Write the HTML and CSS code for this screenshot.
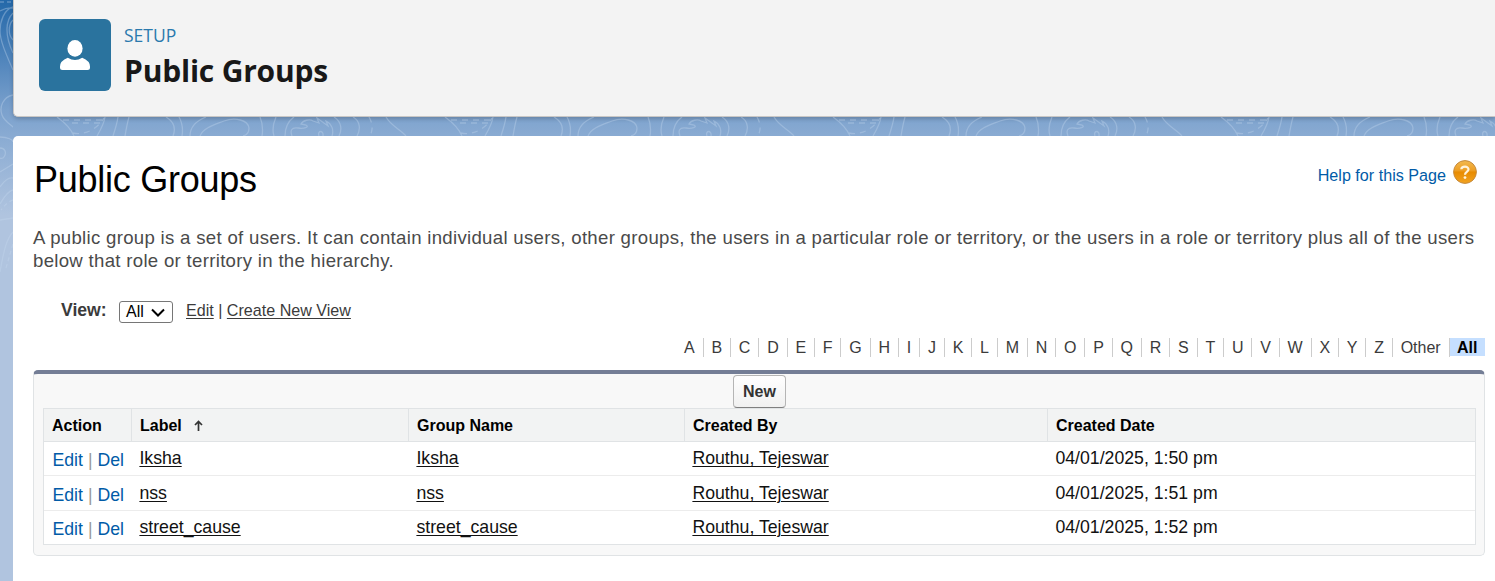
FILE: index.html
```html
<!DOCTYPE html>
<html lang="en">
<head>
<meta charset="utf-8">
<title>Public Groups</title>
<link rel="stylesheet" href="styles.css">
</head>
<body>
<div class="page">
  <div class="rail">
    <svg width="13" height="581" viewBox="0 0 13 581" class="contours">
      <path d="M13 7C4 9 0 22 0 31S5 52 13 70M13 13C6 20 4 34 13 53M13 20C8 25 8 35 13 40M0 11Q7 7 13 8"/>
      <path d="M13 95C3 97-1 107 2 115C5 124 16 126 21 136M0 137C8 137 13 140 13 142M0 148C5 148 6 152 5 155S2 159 0 158M13 164L0 172M13 178C8 177 4 181 0 187M13 190C8 191 4 197 0 204M0 220L13 218M13 232C7 238 4 249 0 272" />
      <path stroke-dasharray="4 3" d="M0 2H13M13 200C9 201 4 206 1 210M13 244L6 268"/>
    </svg>
  </div>
  <div class="main">
    <header class="setup-header">
      <div class="setup-icon">
        <svg width="30" height="30" viewBox="0 0 30 30"><ellipse cx="15" cy="8.4" rx="7.6" ry="8.4" fill="#fff"/><path fill="#fff" d="M7.8 17.8Q15 22.2 22.2 17.8Q30 21 30 26.5V27.5Q30 30 27.5 30H2.500Q0 30 0 27.500V26.500Q0 21 7.800 17.800Z"/></svg>
      </div>
      <div>
        <div class="eyebrow">SETUP</div>
        <div class="setup-title">Public Groups</div>
      </div>
    </header>
    <svg class="contours strip" width="1482" height="19" viewBox="13 117 1482 19">
      <defs>
        <g id="tile">
          <path d="M57 117C64 122 71 129 74 136M105 117C104 124 100 131 97 136M118 117C117 124 115 130 113 136M129 117C127 124 126 130 125 136M166 117C176 123 175 131 173 136M179 117C183 124 183 130 182 136M190 136C190 127 196 121 206 117M200 136C203 128 214 125 224 121C235 117 248 120 249 128C249 132 247 135 243 136M260 117C263 124 263 130 262 136M276 117C273 124 272 130 274 136M294 117C287 122 285 129 285 136M292 136C290 131 291 127 298 128C304 129 310 127 306 125L301 124C303 120 310 119 313 121L319 123L317 118L328 126L326 121C332 124 334 130 332 136M319 136C317 130 324 130 323 136M334 117C342 122 342 130 339 136M353 117C360 121 361 129 357 136M386 117C391 126 400 129 406 136"/>
          <path stroke-dasharray="6 5" d="M63 120H102M72 123H103M73 133C88 136 99 126 104 118M369 117C373 124 373 130 370 136"/>
        </g>
      </defs>
      <use href="#tile"/><use href="#tile" x="388"/><use href="#tile" x="776"/><use href="#tile" x="1164"/>
    </svg>
    <main class="content">
      <div class="title-row">
        <h1>Public Groups</h1>
        <a class="help">Help for this Page
          <svg width="24" height="24" viewBox="0 0 24 24"><defs><linearGradient id="orange" x1="0" y1="0" x2="0" y2="1"><stop offset="0" stop-color="#f2b950"/><stop offset=".45" stop-color="#ed9d22"/><stop offset=".5" stop-color="#e88b00"/><stop offset="1" stop-color="#f2a321"/></linearGradient></defs><circle cx="12" cy="12" r="11.400" fill="url(#orange)" stroke="#c58a3e"/><path d="M8.300 9.300C8.500 5.800 15.500 5.700 15.500 9.300C15.500 12 12 11.800 12 14.800" fill="none" stroke="#fff3dc" stroke-width="2.200"/><circle cx="12" cy="17.600" r="1.400" fill="#fff3dc"/></svg>
        </a>
      </div>
      <p class="description">A public group is a set of users. It can contain individual users, other groups, the users in a particular role or territory, or the users in a role or territory plus all of the users<br>below that role or territory in the hierarchy.</p>
      <div class="view-row">
        <b>View:</b>
        <span class="select">All <svg width="14" height="9" viewBox="0 0 14 9"><path d="M1 1.500L7 7.500L13 1.500" fill="none" stroke="#000" stroke-width="2"/></svg></span>
        <span class="view-links"><u>Edit</u> | <u>Create New View</u></span>
      </div>
      <nav class="rolodex"><a>A</a><a>B</a><a>C</a><a>D</a><a>E</a><a>F</a><a>G</a><a>H</a><a>I</a><a>J</a><a>K</a><a>L</a><a>M</a><a>N</a><a>O</a><a>P</a><a>Q</a><a>R</a><a>S</a><a>T</a><a>U</a><a>V</a><a>W</a><a>X</a><a>Y</a><a>Z</a><a>Other</a><a class="current">All</a></nav>
      <section class="list">
        <div class="buttons"><button>New</button></div>
        <div class="table">
          <div class="row head"><div>Action</div><div>Label <svg width="9" height="11" viewBox="0 0 9 11"><path d="M4.500 11V1.500M1 5L4.500 1.500L8 5" fill="none" stroke="#333" stroke-width="1.700"/></svg></div><div>Group Name</div><div>Created By</div><div>Created Date</div></div>
          <div class="row"><div class="actions"><a>Edit</a><i>|</i><a>Del</a></div><div><u>Iksha</u></div><div><u>Iksha</u></div><div><u>Routhu, Tejeswar</u></div><div>04/01/2025, 1:50 pm</div></div>
          <div class="row mid"><div class="actions"><a>Edit</a><i>|</i><a>Del</a></div><div><u>nss</u></div><div><u>nss</u></div><div><u>Routhu, Tejeswar</u></div><div>04/01/2025, 1:51 pm</div></div>
          <div class="row"><div class="actions"><a>Edit</a><i>|</i><a>Del</a></div><div><u>street_cause</u></div><div><u>street_cause</u></div><div><u>Routhu, Tejeswar</u></div><div>04/01/2025, 1:52 pm</div></div>
        </div>
      </section>
    </main>
  </div>
</div>
</body>
</html>
```
FILE: styles.css
```css
* { box-sizing: border-box; }
body { margin: 0; overflow: hidden; font: 16px "Liberation Sans", Arial, sans-serif; color: #3b3b3b; }
.page { display: grid; grid-template-columns: 13px 1fr; height: 581px; background: linear-gradient(#2468a9 0, #4f84bb 58px, #7ba1cd 110px, #8eaed4 145px, #b0c4df 215px); }
.rail { overflow: hidden; }
.contours { display: block; fill: none; stroke: #c5d9ee; stroke-opacity: .36; stroke-width: 1.3; }
.main { display: flex; flex-direction: column; min-width: 0; }
.setup-header { display: flex; height: 117px; padding: 19px 0 0 25px; gap: 13px; background: #f3f3f3; border: 1px solid #c9c7c5; border-width: 0 0 1px 1px; border-radius: 0 0 0 5px; box-shadow: 0 2px 4px rgba(0,0,0,.2); }
.setup-icon { display: flex; align-items: center; justify-content: center; width: 72px; height: 72px; border-radius: 6px; background: #2a739e; }
.eyebrow { padding-top: 5px; font: 17.5px/23px "Open Sans", sans-serif; color: #2a79ad; }
.setup-title { font: bold 30px/40px "Open Sans", sans-serif; letter-spacing: -.2px; padding-top: 4px; color: #181818; }
.strip { flex: none; }
.content { flex: 1; padding: 0 10px 0 20px; background: #fff; border-radius: 5px 0 0 0; }
.title-row { display: flex; justify-content: space-between; height: 90px; padding: 22px 8px 0 1px; }
h1 { margin: 0; font-size: 36px; letter-spacing: -.25px; line-height: 44px; font-weight: 400; color: #000; }
.help { display: flex; gap: 7px; height: 24px; margin-top: 2px; font-size: 16.15px; line-height: 31px; color: #015ba7; }
.description { margin: 0; font-size: 18.6px; letter-spacing: .305px; line-height: 23px; white-space: nowrap; color: #4a4a4a; }
.view-row { display: flex; height: 38px; margin-top: 28px; padding-left: 28px; line-height: 20px; }
.view-row b { width: 58px; font-size: 17.6px; }
.view-links { font-size: 16.1px; line-height: 21px; }
.select { display: flex; align-items: center; gap: 7px; width: 54px; height: 22px; margin: 1px 13px 0 0; padding-left: 6px; border: 1px solid #767676; border-radius: 3px; line-height: 22px; color: #000; }
.rolodex { display: flex; justify-content: flex-end; height: 32px; }
.rolodex a { height: 19px; padding: 0 7.860px; border-right: 1px solid #ccc; line-height: 19px; }
.rolodex .current { height: 18px; padding: 0 7.500px; border: 0; background: #c5dfff; font-weight: 700; color: #000; }
.list { height: 186px; padding: 0 8px 0 9px; background: #f8f8f8; border: 1px solid #e0e3e5; border-top: 4px solid #747e96; border-radius: 5px; }
.buttons { display: flex; justify-content: center; height: 34px; padding-top: 1px; }
button { width: 53px; height: 33px; padding: 0; border: 1px solid #b5b5b5; border-bottom-color: #7f7f7f; border-radius: 4px; background: linear-gradient(#fff, #f0f0f0); font: bold 16px "Liberation Sans", Arial, sans-serif; color: #333; }
.table { height: 137px; border: 1px solid #e0e3e5; background: #fff; color: #111; }
.row { display: grid; grid-template-columns: 87px 277px 276px 363px 1fr; height: 34px; border-bottom: 1px solid #ececec; font-size: 17.7px; line-height: 32px; }
.row > div { padding-left: 8.400px; white-space: nowrap; }
.row.mid { height: 35px; line-height: 34px; }
.row:last-child { border: 0; }
.row.head { height: 33px; background: #f2f3f3; border-color: #e0e3e5; font-size: 16px; font-weight: 700; color: #000; line-height: 33px; }
.row.head > div { padding-left: 8px; }
.head > div + div { border-left: 1px solid #e0e3e5; }
.head svg { margin-left: 8px; }
.row .actions { padding-top: 2px; color: #015ba7; }
.actions i { margin: 0 5px; font-style: normal; color: #999; }
u { text-decoration-thickness: 1px; text-underline-offset: 2px; }
```
